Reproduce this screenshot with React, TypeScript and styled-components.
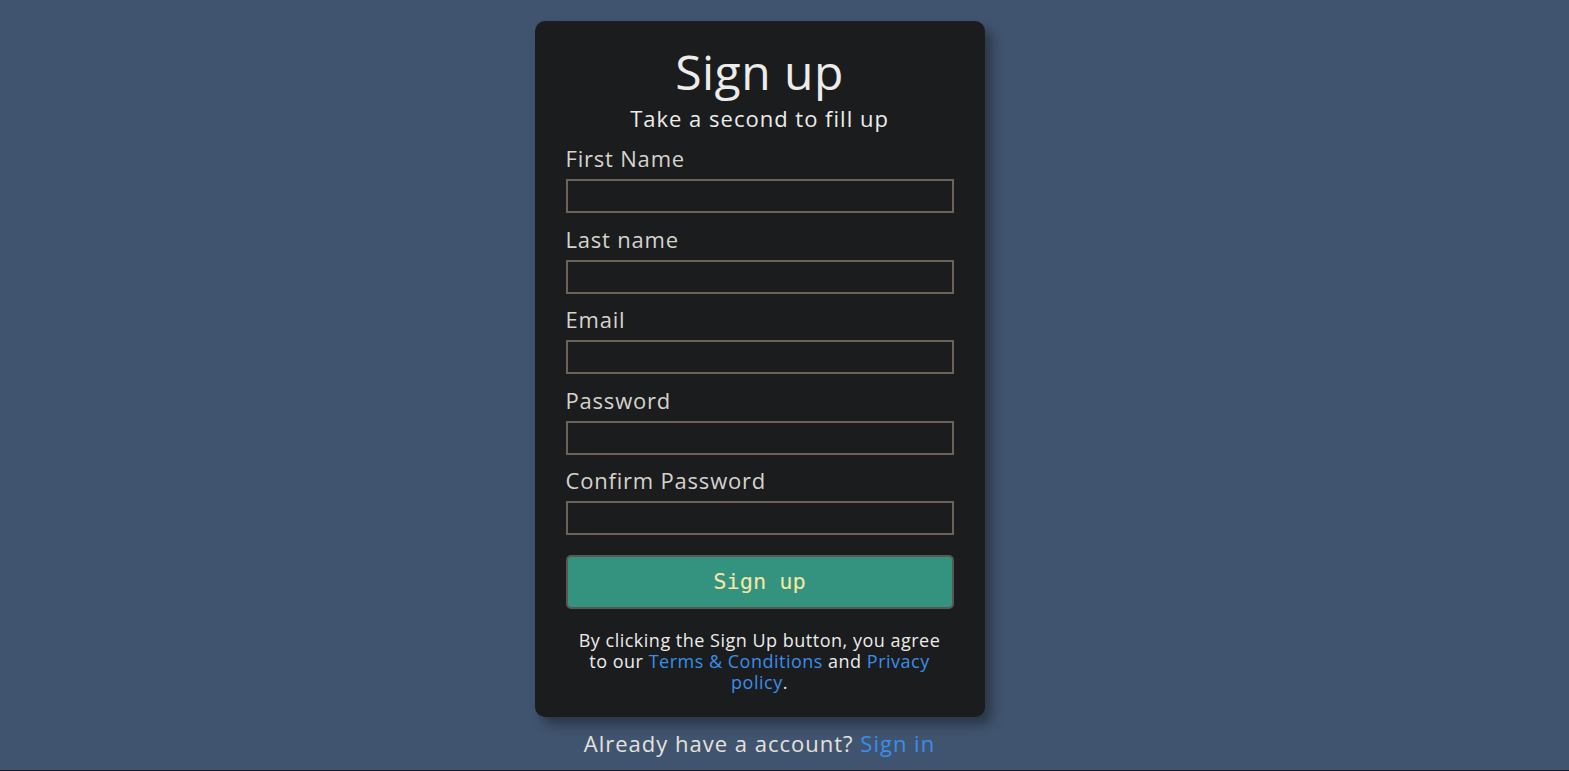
import React from "react";
import styled, { createGlobalStyle } from "styled-components";

const GlobalStyle = createGlobalStyle`
  html {
    background: #1a1c21;
  }
  body {
    margin: 0;
    height: 770px;
    background: #41546f;
    font-family: "Open Sans", "Noto Sans", sans-serif;
  }
`;

const Page = styled.div`
  display: flex;
  flex-direction: column;
  align-items: center;
  padding: 21px 50px 0 0;
`;

const Card = styled.form`
  box-sizing: border-box;
  width: 450px;
  background: #1b1c1e;
  border-radius: 10px;
  padding: 23px 31px 24px;
  box-shadow: 7px 8px 12px rgba(0, 0, 0, 0.35);
  display: flex;
  flex-direction: column;
`;

const Title = styled.h1`
  margin: 0;
  text-align: center;
  font-size: 48px;
  font-weight: 400;
  line-height: 56px;
  letter-spacing: 0.5px;
  color: #ececea;
`;

const Subtitle = styled.p`
  margin: 3px 0 7px;
  text-align: center;
  font-size: 22px;
  line-height: 30px;
  letter-spacing: 1px;
  color: #ececea;
`;

const Field = styled.div`
  display: flex;
  flex-direction: column;
  margin-bottom: 7.5px;
`;

const Label = styled.label`
  font-size: 22px;
  line-height: 36px;
  letter-spacing: 0.8px;
  color: #d6d3cd;
`;

const Input = styled.input`
  box-sizing: border-box;
  margin-top: 3px;
  height: 34px;
  width: 100%;
  background: #1b1c1e;
  border: 2px solid #6b6358;
  outline: none;
  color: #ececea;
  font-size: 18px;
  padding: 0 8px;
`;

const Button = styled.button`
  box-sizing: border-box;
  margin-top: 12px;
  height: 54px;
  width: 100%;
  background: #33937f;
  border: 2px solid #5a5650;
  border-radius: 5px;
  color: #f6e7a4;
  font-family: "DejaVu Sans Mono", monospace;
  font-size: 22px;
  cursor: pointer;
`;

const Terms = styled.p`
  margin: 21px 12px 0;
  text-align: center;
  font-size: 18px;
  line-height: 21px;
  letter-spacing: 0.5px;
  color: #ececea;
`;

const Link = styled.a`
  color: #3a8ee8;
  text-decoration: none;
`;

const Footer = styled.p`
  margin: 12.5px 0 0;
  font-size: 22px;
  line-height: 28px;
  letter-spacing: 1px;
  color: #e4e2dd;
`;

const fields = ["First Name", "Last name", "Email", "Password", "Confirm Password"];

export default function App() {
  return (
    <>
      <GlobalStyle />
      <Page>
        <Card onSubmit={(e) => e.preventDefault()}>
          <Title>Sign up</Title>
          <Subtitle>Take a second to fill up</Subtitle>
          {fields.map((f) => (
            <Field key={f}>
              <Label>{f}</Label>
              <Input type={f.includes("Password") ? "password" : "text"} />
            </Field>
          ))}
          <Button type="submit">Sign up</Button>
          <Terms>
            By clicking the Sign Up button, you agree to our{" "}
            <Link href="#">Terms &amp; Conditions</Link> and{" "}
            <Link href="#">Privacy policy</Link>.
          </Terms>
        </Card>
        <Footer>
          Already have a account? <Link href="#">Sign in</Link>
        </Footer>
      </Page>
    </>
  );
}
